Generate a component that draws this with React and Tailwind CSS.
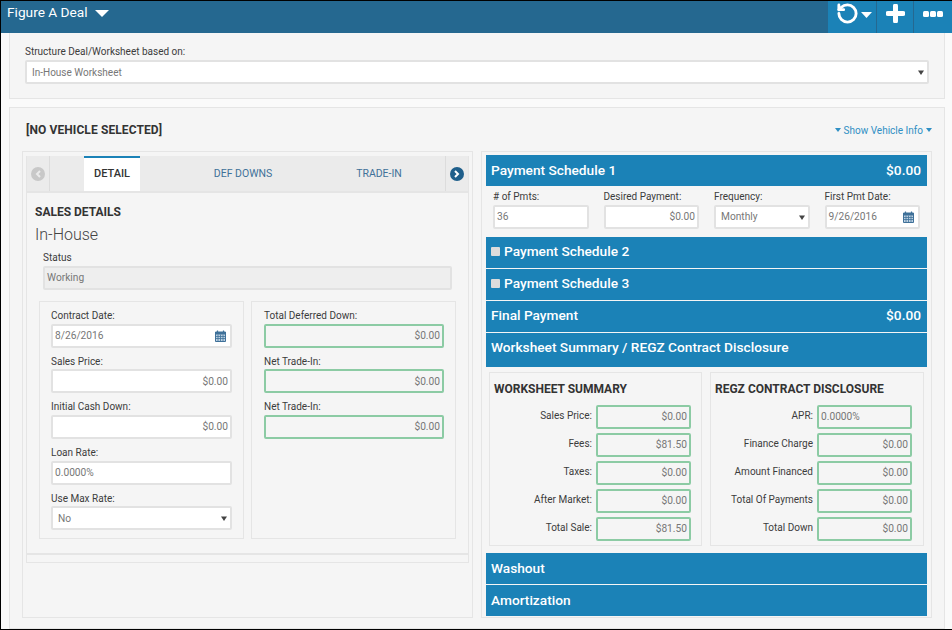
import React from "react";
import { RotateCcw } from "lucide-react";

const Caret = () => (
  <svg width="6" height="5" viewBox="0 0 6 5" className="shrink-0"><path d="M0 0.5h6L3 5z" fill="#444" /></svg>
);

const Cal = () => (
  <svg width="11" height="12" viewBox="0 0 11 12" className="shrink-0">
    <path d="M0.5 2h10v9.5h-10z" fill="#bcd0e2" stroke="#3f7199" />
    <path d="M0.5 2h10v2.5h-10z" fill="#3f7199" />
    <path d="M2.5 0.5v2.5M8.5 0.5v2.5" stroke="#3f7199" strokeWidth="1.2" />
    <path d="M0.5 6.5h10M0.5 8.5h10M3 4.5v7M5.5 4.5v7M8 4.5v7" stroke="#3f7199" strokeWidth="0.8" />
  </svg>
);

const Field = ({ label, value, right, cal, select, green, compact }) => (
  <div className="flex flex-col">
    <div className={`${compact ? "h-[19px] pt-[4px]" : "h-[21.67px] pt-[7px]"} text-[10px] leading-[14px] text-[#3c3c3c]`}>{label}</div>
    <Box value={value} right={right} cal={cal} select={select} green={green} />
  </div>
);

const Box = ({ value, right, cal, select, green, className = "" }) => (
  <div
    className={`flex h-[24px] items-center justify-between rounded-[2px] border-2 text-[10.2px] text-[#777] ${
      green ? "border-[#8ccba4] bg-[#f5f5f5]" : "border-[#e2e2e2] bg-white"
    } ${select ? "pl-[5px] pr-[3px]" : "px-[2px]"} ${right ? "justify-end" : ""} ${className}`}
  >
    <span>{value}</span>
    {cal && <span className="mr-[2px]"><Cal /></span>}
    {select && <Caret />}
  </div>
);

const Bar = ({ title, amount, check, h = "h-[31px]", items = "items-center" }) => (
  <div className={`flex ${h} ${items} justify-between bg-[#1b82b7] pl-[5px] pr-[6px] text-[13.7px] font-medium text-white`}>
    <div className="flex items-center">
      {check && <span className="mr-[4px] size-[9px] rounded-[1px] bg-[#dcdcdc]" />}
      <span>{title}</span>
    </div>
    {amount && <span>{amount}</span>}
  </div>
);

const SumRow = ({ label, value, labelW }) => (
  <div className="flex h-[28px] items-start">
    <div className={`${labelW} pt-[4px] pr-[4px] text-right text-[10px] leading-[14px] text-[#3c3c3c]`}>{label}</div>
    <Box value={value} right={value !== "0.0000%"} green className="w-[95px]" />
  </div>
);

export default function App() {
  return (
    <div className="flex h-[630px] w-[952px] flex-col overflow-hidden border-y border-l border-black bg-[#fafafa] [font-family:Roboto,sans-serif]">
      <header className="flex h-[32px] shrink-0 items-stretch justify-between bg-[#256890] text-white">
        <div className="flex items-start pl-[6px] pt-[2px]">
          <span className="text-[13.7px] leading-[18px]">Figure A Deal</span>
          <svg width="14" height="7" viewBox="0 0 14 7" className="ml-[7px] mt-[7px]"><path d="M0 0h14L7 7z" fill="#fff" /></svg>
        </div>
        <div className="flex w-[124px] bg-[#1b82b7]">
          <div className="flex w-[49px] items-start border-r border-[#256890] pl-[8px] pt-[1px]">
            <RotateCcw size={23} strokeWidth={3} />
            <svg width="11" height="6" viewBox="0 0 11 6" className="ml-[2px] mt-[10px]"><path d="M0 0h11L5.5 6z" fill="#fff" /></svg>
          </div>
          <div className="flex w-[37px] items-start justify-center border-r border-[#256890] pt-[3px]">
            <svg width="19" height="19" viewBox="0 0 19 19"><path d="M9.5 2v15M2 9.5h15" stroke="#fff" strokeWidth="5" strokeLinecap="round" /></svg>
          </div>
          <div className="flex flex-1 items-start justify-center gap-[1px] pt-[10px]">
            <span className="size-[6px] rounded-[1.5px] bg-white" />
            <span className="size-[6px] rounded-[1.5px] bg-white" />
            <span className="size-[6px] rounded-[1.5px] bg-white" />
          </div>
        </div>
      </header>

      <main className="flex flex-1 flex-col gap-[8px] pl-[8px] pr-[7px]">
        <section className="h-[66px] shrink-0 border border-t-0 border-[#e5e5e5] bg-[#f5f5f5] px-[15px] pt-[11px]">
          <div className="h-[16px] pt-[1px] text-[10px] leading-[14px] text-[#3c3c3c]">Structure Deal/Worksheet based on:</div>
          <Box value="In-House Worksheet" select className="!text-[10px]" />
        </section>

        <section className="flex-1 border border-[#e5e5e5] bg-[#f5f5f5] px-[12px]">
          <div className="flex h-[43px] items-center justify-between pl-[4px] pt-[1px]">
            <span className="text-[12px] font-bold tracking-[0.1px] text-[#333]">[NO VEHICLE SELECTED]</span>
            <span className="flex items-center gap-[3px] text-[10px] text-[#2f8fc4]">
              <svg width="6" height="4" viewBox="0 0 6 4"><path d="M0 0h6L3 4z" fill="#2f8fc4" /></svg>
              Show Vehicle Info
              <svg width="6" height="4" viewBox="0 0 6 4"><path d="M0 0h6L3 4z" fill="#2f8fc4" /></svg>
            </span>
          </div>

          <div className="flex gap-[8px]">
            {/* left */}
            <div className="h-[467px] w-[451px] border border-[#e5e5e5] pl-[3px] pr-[3px] pt-[4px]">
              <div className="h-[399px] border-x border-b-2 border-[#e5e5e5]">
                <div className="flex h-[35px] items-stretch bg-[#ebebeb] text-[10.5px]">
                  <div className="flex w-[23px] items-center justify-center border-r border-[#dcdcdc] pr-[1px]">
                    <span className="flex size-[14px] items-center justify-center rounded-full bg-[#c8c8c8]">
                      <svg width="6" height="8" viewBox="0 0 6 8"><path d="M5 1L2 4l3 3" fill="none" stroke="#ebebeb" strokeWidth="2" /></svg>
                    </span>
                  </div>
                  <div className="w-[34px]" />
                  <div className="flex w-[56px] items-center justify-center border-t-2 border-[#1b82b7] bg-white text-[11px] font-medium text-[#333]">DETAIL</div>
                  <div className="flex w-[206px] items-center justify-center text-[#3f7199]">DEF DOWNS</div>
                  <div className="flex w-[66px] items-center justify-center text-[#3f7199]">TRADE-IN</div>
                  <div className="w-[33px]" />
                  <div className="flex flex-1 items-center justify-center border-l border-[#dcdcdc]">
                    <span className="flex size-[14px] items-center justify-center rounded-full bg-[#1f5f8b]">
                      <svg width="6" height="8" viewBox="0 0 6 8"><path d="M1 1l3 3-3 3" fill="none" stroke="#fff" strokeWidth="2" /></svg>
                    </span>
                  </div>
                </div>
                <div className="border-t-2 border-[#e5e5e5] px-[8px] pt-[12px]">
                  <div className="text-[12px] font-bold leading-[14px] text-[#333]">SALES DETAILS</div>
                  <div className="mt-[6px] text-[16px] font-light leading-[20px] text-[#444]">In-House</div>
                  <div className="mx-[8px] mt-[6px]">
                    <div className="h-[15px] text-[10px] leading-[14px] text-[#3c3c3c]">Status</div>
                    <div className="flex h-[24px] items-center rounded-[2px] border-2 border-[#e2e2e2] bg-[#eeeeee] px-[2px] text-[10.2px] text-[#777]">Working</div>
                  </div>
                  <div className="mt-[11px] flex gap-[7px] pl-[4px]">
                    <div className="flex h-[238px] w-[205px] flex-col border border-[#e5e5e5] px-[11px]">
                      <Field label="Contract Date:" value="8/26/2016" cal />
                      <Field label="Sales Price:" value="$0.00" right />
                      <Field label="Initial Cash Down:" value="$0.00" right />
                      <Field label="Loan Rate:" value="0.0000%" />
                      <Field label="Use Max Rate:" value="No" select />
                    </div>
                    <div className="flex h-[238px] w-[205px] flex-col border border-[#e5e5e5] pl-[12px] pr-[11px]">
                      <Field label="Total Deferred Down:" value="$0.00" right green />
                      <Field label="Net Trade-In:" value="$0.00" right green />
                      <Field label="Net Trade-In:" value="$0.00" right green />
                    </div>
                  </div>
                </div>
              </div>
              <div className="h-[8px] border-x border-b border-[#e5e5e5]" />
            </div>

            {/* right */}
            <div className="h-[467px] w-[451px] border border-[#e5e5e5] px-[4px] pt-[3px]">
              <Bar title="Payment Schedule 1" amount="$0.00" />
              <div className="grid h-[51px] grid-cols-4 gap-x-[15px] px-[7px]">
                <Field compact label="# of Pmts:" value="36" />
                <Field compact label="Desired Payment:" value="$0.00" right />
                <Field compact label="Frequency:" value="Monthly" select />
                <Field compact label="First Pmt Date:" value="9/26/2016" cal />
              </div>
              <div className="flex flex-col gap-px">
                <Bar title="Payment Schedule 2" check items="items-center pb-[2px]" />
                <Bar title="Payment Schedule 3" check items="items-center pb-[2px]" />
                <Bar title="Final Payment" amount="$0.00" items="items-center pb-[2px]" />
                <Bar title="Worksheet Summary / REGZ Contract Disclosure" h="h-[34px]" items="items-start pt-[4px]" />
              </div>
              <div className="flex gap-[8px] px-[3px] pt-[5px]">
                <div className="h-[174px] w-[213px] border border-[#e5e5e5] px-[4px]">
                  <div className="flex h-[32px] items-center text-[12px] font-bold text-[#333]">WORKSHEET SUMMARY</div>
                  <SumRow labelW="w-[102px]" label="Sales Price:" value="$0.00" />
                  <SumRow labelW="w-[102px]" label="Fees:" value="$81.50" />
                  <SumRow labelW="w-[102px]" label="Taxes:" value="$0.00" />
                  <SumRow labelW="w-[102px]" label="After Market:" value="$0.00" />
                  <SumRow labelW="w-[102px]" label="Total Sale:" value="$81.50" />
                </div>
                <div className="h-[174px] w-[214px] border border-[#e5e5e5] px-[4px]">
                  <div className="flex h-[32px] items-center text-[12px] font-bold text-[#333]">REGZ CONTRACT DISCLOSURE</div>
                  <SumRow labelW="w-[102px]" label="APR:" value="0.0000%" />
                  <SumRow labelW="w-[102px]" label="Finance Charge" value="$0.00" />
                  <SumRow labelW="w-[102px]" label="Amount Financed" value="$0.00" />
                  <SumRow labelW="w-[102px]" label="Total Of Payments" value="$0.00" />
                  <SumRow labelW="w-[102px]" label="Total Down" value="$0.00" />
                </div>
              </div>
              <div className="mt-[7px] flex flex-col gap-px">
                <Bar title="Washout" />
                <Bar title="Amortization" />
              </div>
            </div>
          </div>
        </section>
      </main>
    </div>
  );
}
